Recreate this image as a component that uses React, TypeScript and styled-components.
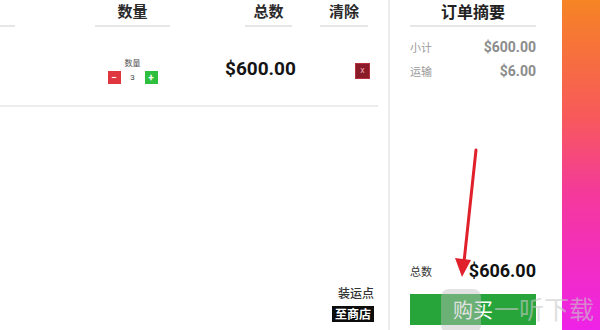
import React from 'react'
import styled, { createGlobalStyle } from 'styled-components'

const GlobalStyle = createGlobalStyle`
  html, body {
    margin: 0;
    padding: 0;
    background: #ffffff;
  }
  body {
    font-family: Roboto, "Noto Sans CJK SC", sans-serif;
  }
`

const headers = [
  { label: '', w: 15, ml: 0 },
  { label: '数量', w: 75, ml: 80 },
  { label: '总数', w: 47, ml: 75 },
  { label: '清除', w: 48, ml: 28 },
]

const App = () => {
  return (
    <Page>
      <GlobalStyle />
      <Cart>
        <HeaderRow>
          {headers.map((h, i) => (
            <HeaderCell key={i} $w={h.w} $ml={h.ml}>
              {h.label}
            </HeaderCell>
          ))}
        </HeaderRow>

        <ItemRow>
          <QtyCell>
            <QtyLabel>数量</QtyLabel>
            <QtyControls>
              <QtyButton $color="#e0363f">−</QtyButton>
              <QtyValue>3</QtyValue>
              <QtyButton $color="#2fbf3f">+</QtyButton>
            </QtyControls>
          </QtyCell>
          <ItemTotal>$600.00</ItemTotal>
          <ClearButton>x</ClearButton>
        </ItemRow>

        <CartFooter>
          <ShipLabel>装运点</ShipLabel>
          <ShopTag>至商店</ShopTag>
        </CartFooter>
      </Cart>

      <Summary>
        <SummaryTitle>订单摘要</SummaryTitle>
        <SummaryLine>
          <LineLabel>小计</LineLabel>
          <LineValue>$600.00</LineValue>
        </SummaryLine>
        <SummaryLine>
          <LineLabel>运输</LineLabel>
          <LineValue>$6.00</LineValue>
        </SummaryLine>

        <TotalBlock>
          <TotalLine>
            <TotalLabel>总数</TotalLabel>
            <TotalValue>$606.00</TotalValue>
          </TotalLine>
          <BuyButton>购买</BuyButton>
        </TotalBlock>
      </Summary>

      <GradientBar />

      <Arrow width="600" height="330" viewBox="0 0 600 330">
        <line x1="476" y1="150" x2="464" y2="262" stroke="#e0202a" strokeWidth="3" strokeLinecap="round" />
        <polygon points="455,258 471,260 462,277" fill="#e0202a" />
      </Arrow>

      <WatermarkBadge />
      <Watermark>一听下载</Watermark>
    </Page>
  )
}

export default App

const Page = styled.div`
  position: relative;
  display: flex;
  width: 600px;
  height: 330px;
  overflow: hidden;
  background: #ffffff;
`

const Cart = styled.div`
  width: 390px;
  height: 100%;
  border-right: 2px solid #ececec;
  display: flex;
  flex-direction: column;
  box-sizing: border-box;
`

const HeaderRow = styled.div`
  display: flex;
  align-items: flex-end;
  height: 27px;
`

const HeaderCell = styled.div<{ $w: number; $ml: number }>`
  width: ${(p) => p.$w}px;
  margin-left: ${(p) => p.$ml}px;
  text-align: center;
  font-family: "Noto Sans CJK SC", sans-serif;
  font-weight: 700;
  font-size: 15px;
  line-height: 19px;
  color: #2a2a2a;
  padding-bottom: 5px;
  border-bottom: 2px solid #e6e6e6;
`

const ItemRow = styled.div`
  display: flex;
  align-items: center;
  height: 80px;
  padding-top: 9px;
  box-sizing: border-box;
  width: 378px;
  border-bottom: 2px solid #ececec;
`

const QtyCell = styled.div`
  width: 75px;
  margin-left: 95px;
  display: flex;
  flex-direction: column;
  align-items: center;
  gap: 3px;
`

const QtyLabel = styled.div`
  font-family: "Noto Sans CJK SC", sans-serif;
  font-size: 8px;
  line-height: 10px;
  color: #555;
`

const QtyControls = styled.div`
  display: flex;
  align-items: center;
  gap: 8px;
`

const QtyButton = styled.div<{ $color: string }>`
  width: 13px;
  height: 13px;
  background: ${(p) => p.$color};
  color: #fff;
  font-size: 10px;
  font-weight: 700;
  line-height: 13px;
  text-align: center;
`

const QtyValue = styled.span`
  font-size: 8px;
  color: #444;
  width: 8px;
  text-align: center;
`

const ItemTotal = styled.div`
  margin-left: 55px;
  font-weight: 700;
  font-size: 19px;
  color: #141414;
  margin-top: -4px;
`

const ClearButton = styled.div`
  margin-left: 59px;
  width: 13px;
  height: 14px;
  background: #8a1b28;
  border: 1px solid #b8313f;
  color: #e8a0a8;
  font-size: 9px;
  line-height: 13px;
  text-align: center;
`

const CartFooter = styled.div`
  margin-top: auto;
  display: flex;
  flex-direction: column;
  align-items: flex-end;
  gap: 5px;
  padding: 0 14px 8px 0;
`

const ShipLabel = styled.div`
  font-family: "Noto Sans CJK SC", sans-serif;
  font-size: 12px;
  line-height: 16px;
  font-weight: 500;
  color: #333;
`

const ShopTag = styled.div`
  background: #0c0c0c;
  color: #fff;
  font-family: "Noto Sans CJK SC", sans-serif;
  font-weight: 700;
  font-size: 12px;
  line-height: 16px;
  padding: 0 3px;
`

const Summary = styled.div`
  width: 172px;
  height: 100%;
  padding: 0 26px 5px 20px;
  box-sizing: border-box;
  display: flex;
  flex-direction: column;
`

const SummaryTitle = styled.div`
  font-family: "Noto Sans CJK SC", sans-serif;
  font-weight: 700;
  font-size: 16px;
  line-height: 20px;
  text-align: center;
  color: #222;
  padding: 1px 0 4px;
  border-bottom: 2px solid #e6e6e6;
  margin-bottom: 8px;
`

const SummaryLine = styled.div`
  display: flex;
  justify-content: space-between;
  align-items: center;
  height: 24px;
`

const LineLabel = styled.span`
  font-family: "Noto Sans CJK SC", sans-serif;
  font-size: 11px;
  color: #9a9a9a;
`

const LineValue = styled.span`
  font-weight: 700;
  font-size: 14px;
  color: #8c8c8c;
`

const TotalBlock = styled.div`
  margin-top: auto;
  display: flex;
  flex-direction: column;
  gap: 13px;
`

const TotalLine = styled.div`
  display: flex;
  justify-content: space-between;
  align-items: center;
`

const TotalLabel = styled.span`
  font-family: "Noto Sans CJK SC", sans-serif;
  font-size: 11px;
  color: #333;
`

const TotalValue = styled.span`
  font-weight: 700;
  font-size: 18px;
  color: #111;
`

const BuyButton = styled.div`
  height: 31px;
  background: #27a43a;
  color: #fff;
  font-family: "Noto Sans CJK SC", sans-serif;
  font-size: 20px;
  line-height: 31px;
  text-align: center;
`

const GradientBar = styled.div`
  flex: 1;
  height: 100%;
  background: linear-gradient(180deg, #f68424 0%, #f75a5a 35%, #f43a9a 58%, #ee22e8 100%);
`

const Arrow = styled.svg`
  position: absolute;
  inset: 0;
  pointer-events: none;
`

const WatermarkBadge = styled.div`
  position: absolute;
  left: 441px;
  top: 289px;
  width: 40px;
  height: 44px;
  border-radius: 8px;
  background: rgba(190, 190, 190, 0.45);
`

const Watermark = styled.div`
  position: absolute;
  left: 494px;
  top: 291px;
  font-family: "Noto Sans CJK SC", sans-serif;
  font-size: 25px;
  line-height: 34px;
  letter-spacing: 0;
  white-space: nowrap;
  color: rgba(200, 200, 200, 0.6);
  pointer-events: none;
`
